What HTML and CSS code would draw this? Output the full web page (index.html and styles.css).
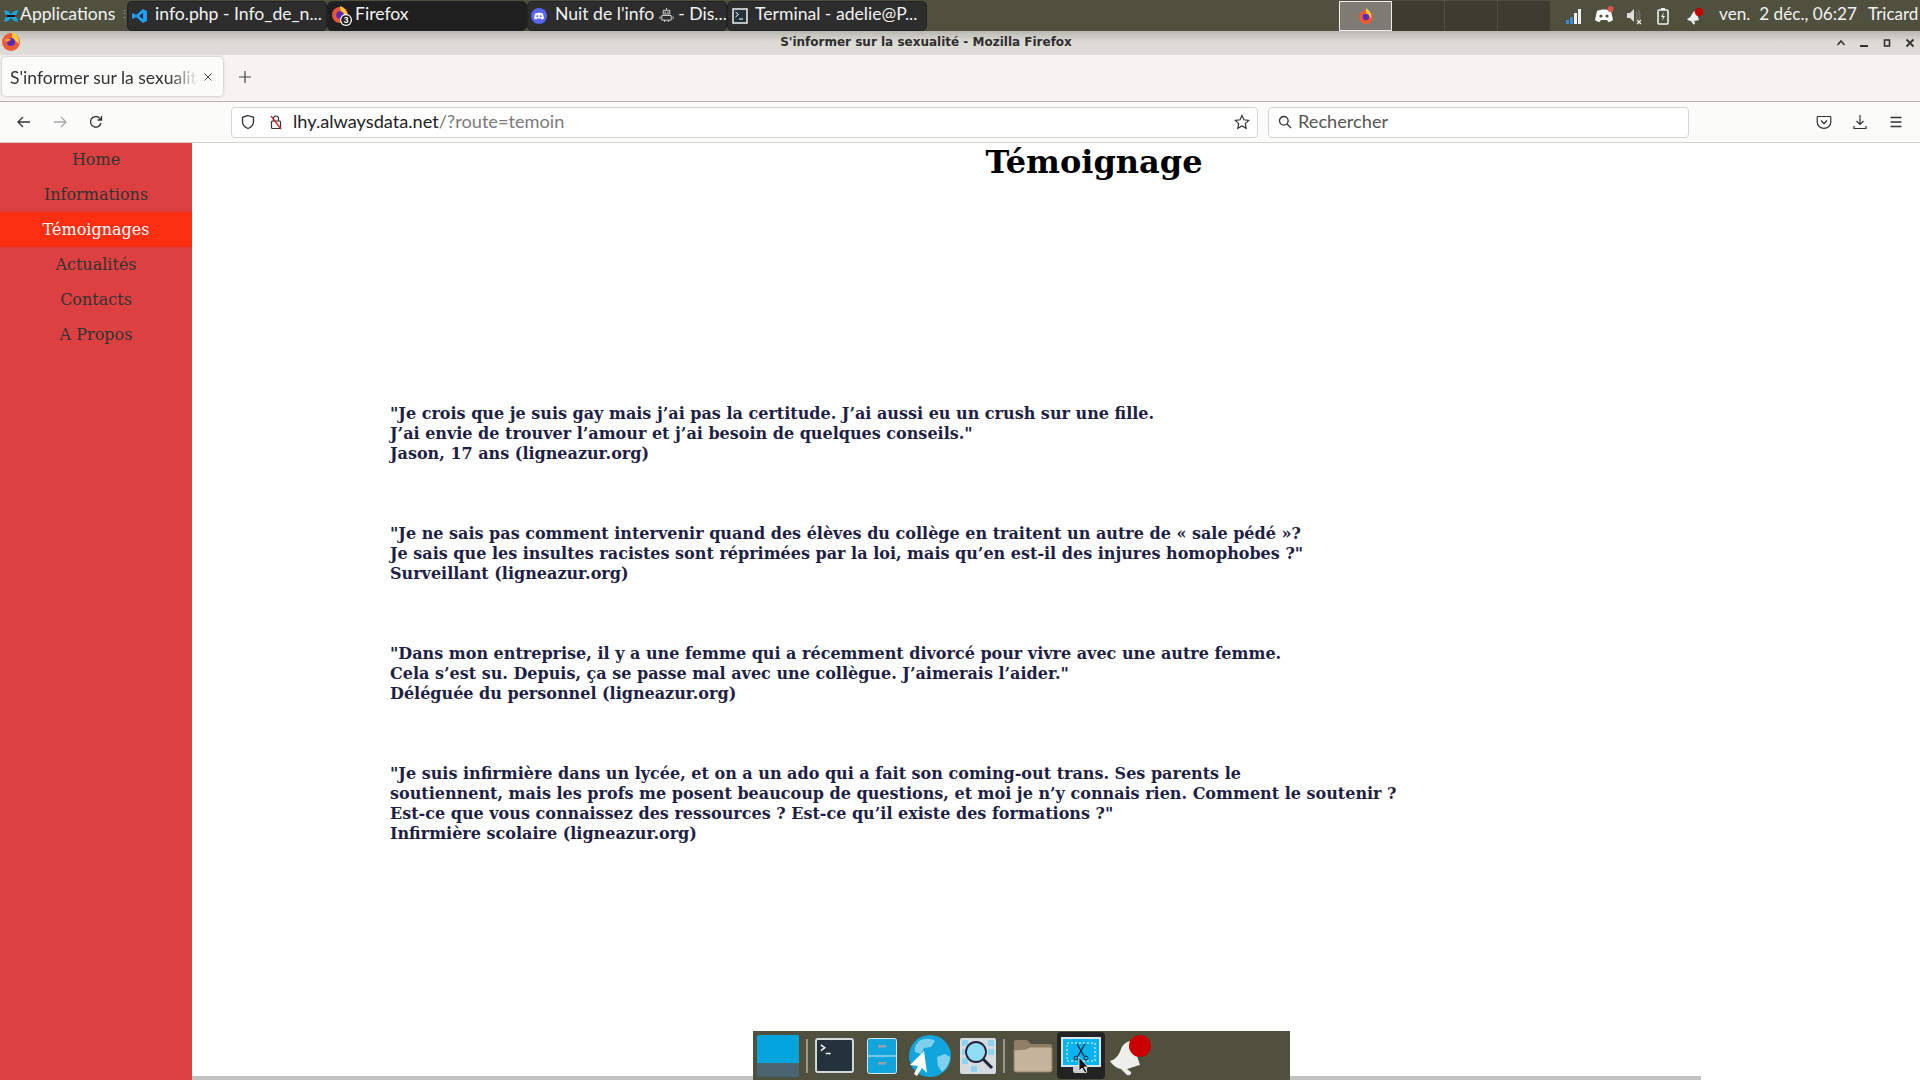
FILE: index.html
```html
<!DOCTYPE html>
<html lang="fr">
<head>
    <meta charset="UTF-8" />
    <title>S'informer sur la sexualité</title>
    <link rel="stylesheet" href="styles.css">
</head>
<body>
    <!-- Panneau du bureau -->
    <div class="panel">
        <div class="app-menu">
            <svg class="ico-16" viewBox="0 0 16 16"><path d="M1 2l4 1 3 3 3-3 4-1-1 4-3 2 3 2 1 4-4-1-3-3-3 3-4 1 1-4 3-2-3-2z" fill="#1aa3d8"/><path d="M4 7h8v2H4z" fill="#111"/></svg>
            <span>Applications</span>
            <span class="grip">⋮</span>
        </div>
        <div class="task">
            <svg class="ico-16" viewBox="0 0 16 16"><path d="M11 1l4 2v10l-4 2-7-6-3 2-1-1V6l1-1 3 2zM11 5L7 8l4 3z" fill="#1f9cf0"/></svg>
            <span>info.php - Info_de_n...</span>
        </div>
        <div class="task task-firefox">
            <svg class="ico-22" viewBox="0 0 22 20"><circle cx="9" cy="9" r="8" fill="#e8553a"/><path d="M9 0c5 2 8 6 7 11L10 6z" fill="#ffc93c"/><circle cx="9" cy="9" r="3.800" fill="#5b2bb5"/><circle cx="15" cy="14" r="6" fill="#fff"/><circle cx="15" cy="14" r="4.800" fill="#222"/><text x="15" y="17" class="badge-num">3</text></svg>
            <span>Firefox</span>
        </div>
        <div class="task task-discord">
            <svg class="ico-16" viewBox="0 0 16 16"><circle cx="8" cy="8" r="8" fill="#5865f2"/><path d="M4 5.500c2.500-1 5.500-1 8 0l1 5c-1 .8-2 1-2.500 1L10 10.500H6L5.500 11.500C5 11.500 4 11.300 3 10.500z" fill="#fff"/><circle cx="6.300" cy="8.300" r="1" fill="#5865f2"/><circle cx="9.700" cy="8.300" r="1" fill="#5865f2"/></svg>
            <span>Nuit de l'info <svg class="robot" viewBox="0 0 16 16"><path d="M8 1v2M4.500 3.500h7v4h-7zM3 9h10v5H3zM1 10v3M15 10v3M6 14v2M10 14v2" fill="none" stroke="#ddd"/><circle cx="6.500" cy="5.500" r=".8" fill="#ddd"/><circle cx="9.500" cy="5.500" r=".8" fill="#ddd"/></svg> - Dis...</span>
        </div>
        <div class="task">
            <svg class="ico-16" viewBox="0 0 16 16"><rect x="1" y="1" width="14" height="14" fill="#24323c" stroke="#eef1f3" stroke-width="1.500"/><path d="M3.500 4l3 2.500-3 2.500M7 11h4" fill="none" stroke="#fff"/></svg>
            <span>Terminal - adelie@P...</span>
        </div>
        <div class="pager">
            <div class="desk active">
                <svg class="ico-18" viewBox="0 0 18 18"><circle cx="9" cy="10" r="7" fill="#ee5a35"/><path d="M9 1c4 3 6 6 5 10L9 7z" fill="#ffc93c"/><circle cx="9" cy="10" r="3.200" fill="#5b2bb5"/></svg>
            </div>
            <div class="desk"></div>
            <div class="desk"></div>
            <div class="desk"></div>
        </div>
        <div class="tray">
            <svg class="ico-18" viewBox="0 0 18 18"><path d="M1 13h3v4H1z" fill="#3d8bd0"/><path d="M5 10h3v7H5z" fill="#3d8bd0"/><path d="M9 6h3v11H9z" fill="#eee"/><path d="M13 2h3v15h-3z" fill="#eee"/></svg>
            <svg class="ico-20" viewBox="0 0 20 20"><path d="M3 5c4-2 10-2 14 0l2 9c-1.500 1.300-3 2-4.500 2L13 14H7l-1.500 2C4 16 2.500 15.300 1 14z" fill="#fff"/><circle cx="7" cy="10" r="1.600" fill="#50503f"/><circle cx="13" cy="10" r="1.600" fill="#50503f"/><circle cx="16.500" cy="3" r="3" fill="#e05050"/></svg>
            <svg class="ico-18" viewBox="0 0 18 18"><path d="M2 6h3l4-4v13l-4-4H2z" fill="#ddd"/><path d="M11 5c1.500 2 1.500 5 0 7M13 3c2.500 3 2.500 8 0 10" fill="none" stroke="#888"/><path d="M12 13l4 4M16 13l-4 4" stroke="#eee" stroke-width="1.300"/></svg>
            <svg class="ico-18" viewBox="0 0 18 18"><rect x="4" y="3" width="10" height="14" rx="1" fill="none" stroke="#eee" stroke-width="1.600"/><path d="M7 1h4v2H7z" fill="#eee"/><path d="M10 5l-3 5h2l-1 4 3-5H9z" fill="#eee"/></svg>
            <svg class="ico-18 tray-bell" viewBox="0 0 18 18"><path d="M1 12c3-1 4-3 5-5 1-2 2-3 4-3l3 9c-1 0-3 1-5 1l1 2c0 1-1 2-2 1l-2-3c-2 0-3-1-4-2z" fill="#eee"/><circle cx="13" cy="5" r="4.200" fill="#c40000"/></svg>
        </div>
        <div class="clock">ven.&nbsp; 2 déc., 06:27</div>
        <div class="user">Tricard</div>
    </div>

    <!-- Barre de titre -->
    <div class="titlebar">
        <svg class="title-logo" viewBox="0 0 20 20"><circle cx="10" cy="11" r="9" fill="#ee5a35"/><path d="M11 1c5 2 8 7 7 12L11 7z" fill="#ffc93c"/><circle cx="10" cy="11" r="4" fill="#5b2bb5"/><path d="M3 9c3-2 6-2 7 0l-4 2z" fill="#ff9a2e"/></svg>
        <div class="title-text">S'informer sur la sexualité - Mozilla Firefox</div>
        <div class="win-btns">
            <svg class="ico-10" viewBox="0 0 10 10"><path d="M1.500 7L5 3l3.500 4" fill="none" stroke="#333" stroke-width="1.600"/></svg>
            <svg class="ico-10" viewBox="0 0 10 10"><path d="M1 8h8" stroke="#333" stroke-width="2"/></svg>
            <svg class="ico-10" viewBox="0 0 10 10"><rect x="2.500" y="2" width="5" height="6" fill="none" stroke="#333" stroke-width="1.600"/></svg>
            <svg class="ico-10" viewBox="0 0 10 10"><path d="M1.500 1.500l7 7M8.500 1.500l-7 7" stroke="#333" stroke-width="1.800"/></svg>
        </div>
    </div>

    <!-- Onglets -->
    <div class="tabbar">
        <div class="tab">
            <span class="tab-label">S'informer sur la sexualité</span>
            <svg class="tab-close" viewBox="0 0 10 10"><path d="M1.500 1.500l7 7M8.500 1.500l-7 7" stroke="#444" stroke-width="1"/></svg>
        </div>
        <svg class="new-tab" viewBox="0 0 14 14"><path d="M7 1v12M1 7h12" stroke="#444" stroke-width="1.200"/></svg>
    </div>

    <!-- Barre de navigation -->
    <div class="navbar">
        <div class="nav-btns">
            <svg class="ico-16" viewBox="0 0 16 16"><path d="M14 8H2M7 3L2 8l5 5" fill="none" stroke="#333" stroke-width="1.300"/></svg>
            <svg class="ico-16" viewBox="0 0 16 16"><path d="M2 8h12M9 3l5 5-5 5" fill="none" stroke="#a8a8a8" stroke-width="1.300"/></svg>
            <svg class="ico-16" viewBox="0 0 16 16"><path d="M13 9a5.300 5.300 0 1 1-1.500-5L13.500 6M13.500 2v4h-4" fill="none" stroke="#333" stroke-width="1.300"/></svg>
        </div>
        <div class="urlbar">
            <svg class="ico-16" viewBox="0 0 16 16"><path d="M8 1.500l5.500 1.800v4.200c0 3.500-2.500 5.800-5.500 7-3-1.200-5.500-3.500-5.500-7V3.300z" fill="none" stroke="#333" stroke-width="1.300"/></svg>
            <svg class="ico-16 lock" viewBox="0 0 16 16"><rect x="3.500" y="7" width="9" height="7.500" rx="1" fill="none" stroke="#333" stroke-width="1.200"/><path d="M5.500 7V4.500a2.500 2.500 0 0 1 5 0V7" fill="none" stroke="#333" stroke-width="1.200"/><path d="M3 2l10 13" stroke="#e0202a" stroke-width="1.300"/></svg>
            <div class="url"><span class="url-host">lhy.alwaysdata.net</span>/?route=temoin</div>
            <svg class="ico-16" viewBox="0 0 16 16"><path d="M8 1.500l2 4.300 4.700.6-3.400 3.200.9 4.700L8 12l-4.200 2.300.9-4.700L1.300 6.400 6 5.800z" fill="none" stroke="#333" stroke-width="1.200"/></svg>
        </div>
        <div class="searchbar">
            <svg class="ico-14" viewBox="0 0 14 14"><circle cx="5.800" cy="5.800" r="4.300" fill="none" stroke="#333" stroke-width="1.300"/><path d="M9 9l4 4" stroke="#333" stroke-width="1.300"/></svg>
            <span>Rechercher</span>
        </div>
        <div class="toolbar-end">
            <svg class="ico-16" viewBox="0 0 16 16"><path d="M2 2.500h12a.8.8 0 0 1 .8.800V8a6.800 6.300 0 0 1-13.600 0V3.300a.8.8 0 0 1 .8-.8z" fill="none" stroke="#333" stroke-width="1.200"/><path d="M5 6.500L8 9.500l3-3" fill="none" stroke="#333" stroke-width="1.300"/></svg>
            <svg class="ico-16" viewBox="0 0 16 16"><path d="M8 1v9M4.500 7L8 10.500 11.500 7M2 12v2.500h12V12" fill="none" stroke="#333" stroke-width="1.200"/></svg>
            <svg class="ico-16" viewBox="0 0 16 16"><path d="M2.500 3.500h11M2.500 8h11M2.500 12.500h11" stroke="#333" stroke-width="1.300"/></svg>
        </div>
    </div>

    <!-- Page -->
    <div class="page">
        <div class="sidebar">
            <a href="#">Home</a>
            <a href="#">Informations</a>
            <a href="#" class="active">Témoignages</a>
            <a href="#">Actualités</a>
            <a href="#">Contacts</a>
            <a href="#">A Propos</a>
        </div>
        <div class="content">
            <h1>Témoignage</h1>
            <div class="quotes">
                <p>"Je crois que je suis gay mais j’ai pas la certitude. J’ai aussi eu un crush sur une fille.<br>
                J’ai envie de trouver l’amour et j’ai besoin de quelques conseils."<br>
                Jason, 17 ans (ligneazur.org)</p>
                <p>"Je ne sais pas comment intervenir quand des élèves du collège en traitent un autre de « sale pédé »?<br>
                Je sais que les insultes racistes sont réprimées par la loi, mais qu’en est-il des injures homophobes ?"<br>
                Surveillant (ligneazur.org)</p>
                <p>"Dans mon entreprise, il y a une femme qui a récemment divorcé pour vivre avec une autre femme.<br>
                Cela s’est su. Depuis, ça se passe mal avec une collègue. J’aimerais l’aider."<br>
                Déléguée du personnel (ligneazur.org)</p>
                <p>"Je suis infirmière dans un lycée, et on a un ado qui a fait son coming-out trans. Ses parents le<br>
                soutiennent, mais les profs me posent beaucoup de questions, et moi je n’y connais rien. Comment le soutenir ?<br>
                Est-ce que vous connaissez des ressources ? Est-ce qu’il existe des formations ?"<br>
                Infirmière scolaire (ligneazur.org)</p>
            </div>
        </div>
    </div>

    <div class="scrollbar"></div>

    <!-- Dock -->
    <div class="dock">
        <div class="dock-item show-desktop"><div class="desk-top"></div><div class="desk-bottom"></div></div>
        <div class="dock-sep"></div>
        <svg class="dock-ico" viewBox="0 0 40 36"><rect x="1" y="1" width="38" height="34" rx="2" fill="#24323c" stroke="#d5d9dc" stroke-width="2"/><path d="M6 7l4 3-4 3M11 16h5" fill="none" stroke="#fff" stroke-width="1.500"/></svg>
        <svg class="dock-ico cabinet" viewBox="0 0 30 36"><rect x="0.500" y="0.500" width="29" height="35" rx="2" fill="#12a5dc" stroke="#d5e6ee"/><path d="M0 18h30" stroke="#d5e6ee"/><rect x="11" y="7" width="8" height="2.500" fill="#8fa3ad"/><rect x="11" y="24" width="8" height="2.500" fill="#8fa3ad"/></svg>
        <svg class="dock-ico globe" viewBox="0 0 42 42"><circle cx="21" cy="21" r="21" fill="#10a5dc"/><path d="M10 6c6-3 12-3 16 0l-4 6-7 1-3 6-6-2c-1-4 1-8 4-11zM28 22l8-3 5 3c0 6-3 11-8 15l-4-6z" fill="#7fd0ee"/><path d="M15 16L18 38 13 33 8 41 5 39 9 31 1 30z" fill="#fff"/></svg>
        <svg class="dock-ico zoom" viewBox="0 0 36 36"><rect width="36" height="36" rx="2" fill="#d5dce0"/><g fill="#8ed3ef"><rect x="2" y="2" width="6" height="6"/><rect x="28" y="2" width="6" height="6"/><rect x="2" y="11" width="6" height="6"/><rect x="28" y="11" width="6" height="6"/><rect x="2" y="20" width="6" height="6"/><rect x="11" y="28" width="6" height="6"/></g><circle cx="16" cy="14" r="10" fill="#8fdcf5" stroke="#223" stroke-width="1.800"/><path d="M23 21l9 9" stroke="#223" stroke-width="3"/></svg>
        <div class="dock-sep"></div>
        <svg class="dock-ico folder" viewBox="0 0 40 36"><path d="M1 4a2 2 0 0 1 2-2h11l4 4h19a2 2 0 0 1 2 2v6H1z" fill="#8f7f66"/><path d="M1 12l12-1 4-2h20a2 2 0 0 1 2 2v21a2 2 0 0 1-2 2H3a2 2 0 0 1-2-2z" fill="#c4b49c" stroke="#8f7f66"/></svg>
        <div class="dock-active">
            <svg class="shot" viewBox="0 0 40 38"><rect x="1" y="1" width="38" height="28" fill="#04b4f0" stroke="#d5e6ee" stroke-width="2"/><rect x="6" y="6" width="28" height="18" fill="none" stroke="#fff" stroke-dasharray="2 2"/><path d="M16 7l7 12M24 7l-7 12" stroke="#223" stroke-width="1.300"/><circle cx="15" cy="21" r="2" fill="none" stroke="#223"/><circle cx="25" cy="21" r="2" fill="none" stroke="#223"/><rect x="12" y="29" width="14" height="7" rx="2" fill="#c8ccd0"/><path d="M18 20v14l3-3 3 5 2-1-3-5h4z" fill="#111" stroke="#eee" stroke-width=".8"/></svg>
        </div>
        <svg class="dock-ico bell" viewBox="0 0 42 42"><path d="M1 26c6-2 9-6 11-12 2-5 6-8 11-8l8 24c-2 0-9 3-13 4l4 3c1 2-2 4-4 3l-6-6c-3 0-9-4-11-8z" fill="#eeeeea"/><circle cx="31" cy="11" r="11" fill="#c80000"/></svg>
    </div>
</body>
</html>
```

FILE: styles.css
```css
* {
    box-sizing: border-box;
}

html, body {
    height: 100%;
}

body {
    margin: 0;
    display: flex;
    flex-direction: column;
    height: 1080px;
    overflow: hidden;
    font-family: "Lato", sans-serif;
    background: white;
    position: relative;
}

svg {
    display: block;
    flex-shrink: 0;
}

.ico-10 { width: 10px; height: 10px; }
.ico-14 { width: 14px; height: 14px; }
.ico-16 { width: 16px; height: 16px; }
.ico-18 { width: 18px; height: 18px; }
.ico-20 { width: 20px; height: 20px; }
.ico-22 { width: 22px; height: 20px; }

/* panneau */
.panel {
    height: 31px;
    background: #50503f;
    color: #f2f2f2;
    display: flex;
    align-items: center;
    font-size: 17.600px;
    white-space: nowrap;
}

.panel span, .clock, .user {
    margin-bottom: 4px;
}

.app-menu {
    width: 127px;
    padding-left: 3px;
    display: flex;
    align-items: center;
    gap: 1px;
}

.panel .grip {
    margin-left: 3px;
    font-size: 11px;
    color: #aaa;
}

.task {
    width: 200px;
    height: 30px;
    background: #2d2d2d;
    border: 1px solid #222;
    border-radius: 5px;
    display: flex;
    align-items: center;
    gap: 7px;
    padding-left: 4px;
    overflow: hidden;
}

.task-firefox {
    background: #1f1f1f;
    gap: 2px;
    padding-left: 3px;
}

.task-discord {
    gap: 8px;
    padding-left: 3px;
}

.robot {
    display: inline-block;
    width: 15px;
    height: 15px;
    vertical-align: -2px;
}

.badge-num {
    font-family: "Liberation Sans", sans-serif;
    font-size: 8.500px;
    font-weight: bold;
    text-anchor: middle;
    fill: #fff;
}

.pager {
    margin-left: 412px;
    display: flex;
    height: 30px;
}

.desk {
    width: 53px;
    background: #3c3c30;
    border-right: 1px solid #50503f;
    display: flex;
    align-items: center;
    justify-content: center;
}

.desk.active {
    background: #7c7c74;
    border: 1px solid #eee;
}

.tray {
    margin-left: 14px;
    display: flex;
    align-items: center;
    gap: 11px;
}

.tray-bell {
    margin-left: 3px;
    margin-right: -3px;
}

.clock {
    margin-left: 18px;
    font-size: 17.200px;
}

.user {
    margin-left: 11px;
    font-size: 17px;
}

/* titre */
.titlebar {
    height: 24px;
    background: linear-gradient(#b8b7b0, #dcdad5 45%, #dedcd8);
    position: relative;
    display: flex;
    align-items: center;
    justify-content: center;
    padding-right: 68px;
}

.title-logo {
    position: absolute;
    left: 1px;
    top: 0;
    width: 20px;
    height: 20px;
}

.title-text {
    font-family: "DejaVu Sans", sans-serif;
    font-size: 12px;
    font-weight: bold;
    color: #2e2e2e;
    margin-bottom: 2px;
}

.win-btns {
    position: absolute;
    right: 5px;
    top: 7px;
    display: flex;
    gap: 13px;
}

/* onglets */
.tabbar {
    height: 47px;
    background: #f5f4f2;
    border-bottom: 1px solid #b5b3ae;
    display: flex;
    align-items: center;
    padding-left: 2px;
}

.tab {
    width: 221px;
    height: 39px;
    margin-top: -3px;
    background: #fbfbfa;
    border-radius: 4px;
    box-shadow: 0 0 3px rgba(0,0,0,0.3);
    display: flex;
    align-items: center;
    padding: 0 10px 0 8px;
    font-size: 17.500px;
    color: #333;
}

.tab-label {
    white-space: nowrap;
    overflow: hidden;
    width: 190px;
    margin-right: 2px;
    margin-top: 1px;
    -webkit-mask-image: linear-gradient(to right, black 85%, transparent);
}

.tab-close {
    width: 10px;
    height: 10px;
    margin-left: 3px;
}

.new-tab {
    width: 14px;
    height: 14px;
    margin-left: 15px;
    margin-top: -2px;
}

/* navigation */
.navbar {
    height: 41px;
    background: #fbfbfa;
    border-bottom: 1px solid #d8d2cc;
    display: flex;
    align-items: center;
    font-size: 18.200px;
}

.nav-btns {
    width: 231px;
    display: flex;
    gap: 20px;
    padding-left: 16px;
}

.urlbar {
    width: 1027px;
    height: 31px;
    background: white;
    border: 1px solid #d5d3ce;
    border-radius: 4px;
    display: flex;
    align-items: center;
    padding: 0 7px 0 8px;
    gap: 5px;
}

.lock {
    margin-left: 7px;
}

.url {
    flex: 1;
    margin-left: 4px;
    margin-bottom: 3px;
    color: #7a7a7a;
}

.url-host {
    color: #222;
}

.searchbar {
    width: 421px;
    height: 31px;
    margin-left: 10px;
    background: white;
    border: 1px solid #d5d3ce;
    border-radius: 4px;
    display: flex;
    align-items: center;
    padding: 0 9px;
    gap: 6px;
    color: #555;
}

.searchbar span {
    margin-bottom: 3px;
}

.toolbar-end {
    margin-left: 127px;
    display: flex;
    gap: 20px;
}

/* page */
.page {
    flex: 1;
    display: flex;
    min-height: 0;
}

.sidebar {
    width: 192px;
    background: #dd4040;
    font-family: "DejaVu Serif", serif;
    font-size: 16px;
}

.sidebar a {
    display: block;
    height: 35px;
    line-height: 35px;
    text-align: center;
    text-decoration: none;
    color: #333;
}

.sidebar a:first-child {
    height: 34px;
    line-height: 33px;
}

.sidebar a.active {
    background: #fb2e12;
    color: white;
}

.content {
    flex: 1;
    font-family: "DejaVu Serif", serif;
    color: #1e1e44;
}

h1 {
    margin: 0;
    height: 261px;
    font-size: 32px;
    line-height: 38px;
    color: black;
    text-align: center;
    padding-left: 76px;
}

.quotes {
    margin-left: 198px;
}

.quotes p {
    margin: 0 0 60px;
    font-size: 16px;
    font-weight: bold;
    line-height: 20px;
    white-space: nowrap;
}

.scrollbar {
    position: absolute;
    left: 192px;
    bottom: 0;
    width: 1509px;
    height: 4px;
    background: #c2c2c2;
}

/* dock */
.dock {
    position: absolute;
    left: 753px;
    bottom: 0;
    width: 537px;
    height: 49px;
    background: #50503f;
    display: flex;
    align-items: center;
    padding-left: 4px;
}

.show-desktop {
    width: 42px;
    height: 42px;
    display: flex;
    flex-direction: column;
    border-radius: 2px;
    overflow: hidden;
}

.desk-top {
    height: 28px;
    background: #04a5dc;
}

.desk-bottom {
    flex: 1;
    background: #4a6470;
}

.dock-sep {
    width: 2px;
    height: 34px;
    margin: 0 7px;
    background: #98988c;
}

.dock-ico {
    width: 39px;
    height: 35px;
}

.dock-ico.cabinet {
    width: 30px;
    height: 36px;
    margin-left: 13px;
}

.dock-ico.globe {
    width: 42px;
    height: 42px;
    margin-left: 12px;
}

.dock-ico.zoom {
    width: 36px;
    height: 36px;
    margin-left: 9px;
}

.dock-ico.folder {
    width: 40px;
    height: 36px;
    margin-left: 1px;
}

.dock-active {
    width: 48px;
    height: 47px;
    margin-left: 4px;
    background: #222;
    border-radius: 4px;
    display: flex;
    align-items: center;
    justify-content: center;
}

.shot {
    width: 40px;
    height: 38px;
}

.dock-ico.bell {
    width: 42px;
    height: 42px;
    margin-left: 4px;
}
```
